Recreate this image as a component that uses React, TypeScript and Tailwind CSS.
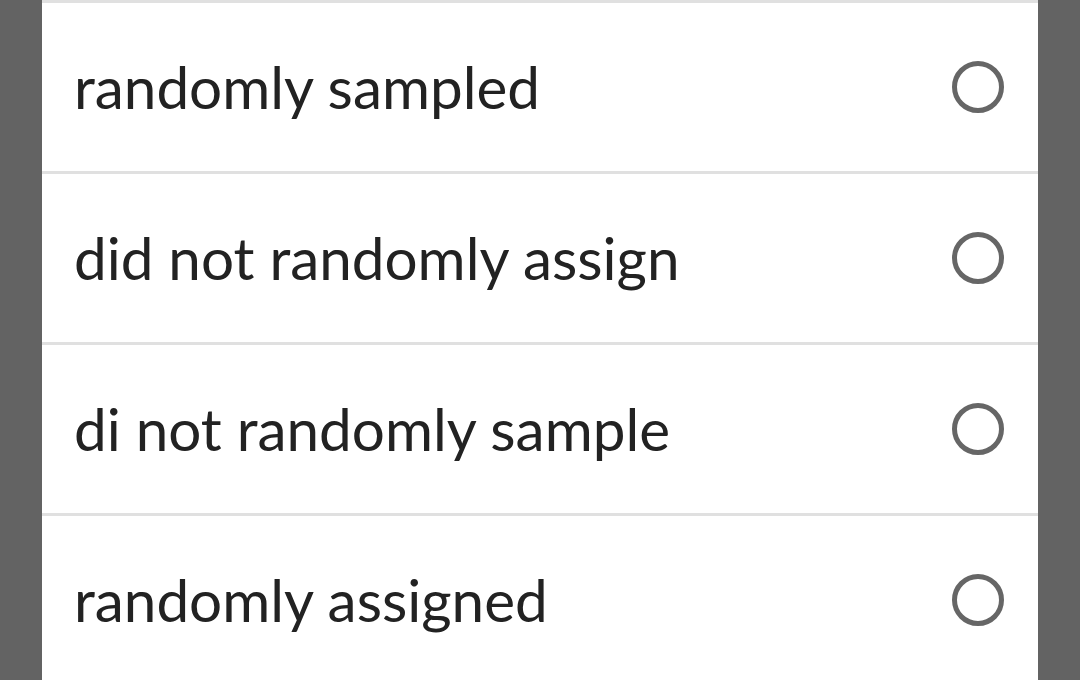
const options = ['randomly sampled', 'did not randomly assign', 'di not randomly sample', 'randomly assigned'];

export default function App() {
  return (
    <div className="h-[680px] w-[1080px] overflow-hidden bg-[#636363] px-[42px]">
      <div className="h-full bg-white">
        {options.map((label) => (
          <label
            key={label}
            className="flex h-[171px] cursor-pointer items-center justify-between border-t-[3px] border-[#e0e0e0] pl-[32px] pr-[34px]"
          >
            <span className="text-[58.4px] text-[#222222]" style={{ fontFamily: 'Lato, sans-serif' }}>
              {label}
            </span>
            <span className="block h-[52px] w-[52px] rounded-full border-[5px] border-[#666666]" />
          </label>
        ))}
      </div>
    </div>
  );
}
